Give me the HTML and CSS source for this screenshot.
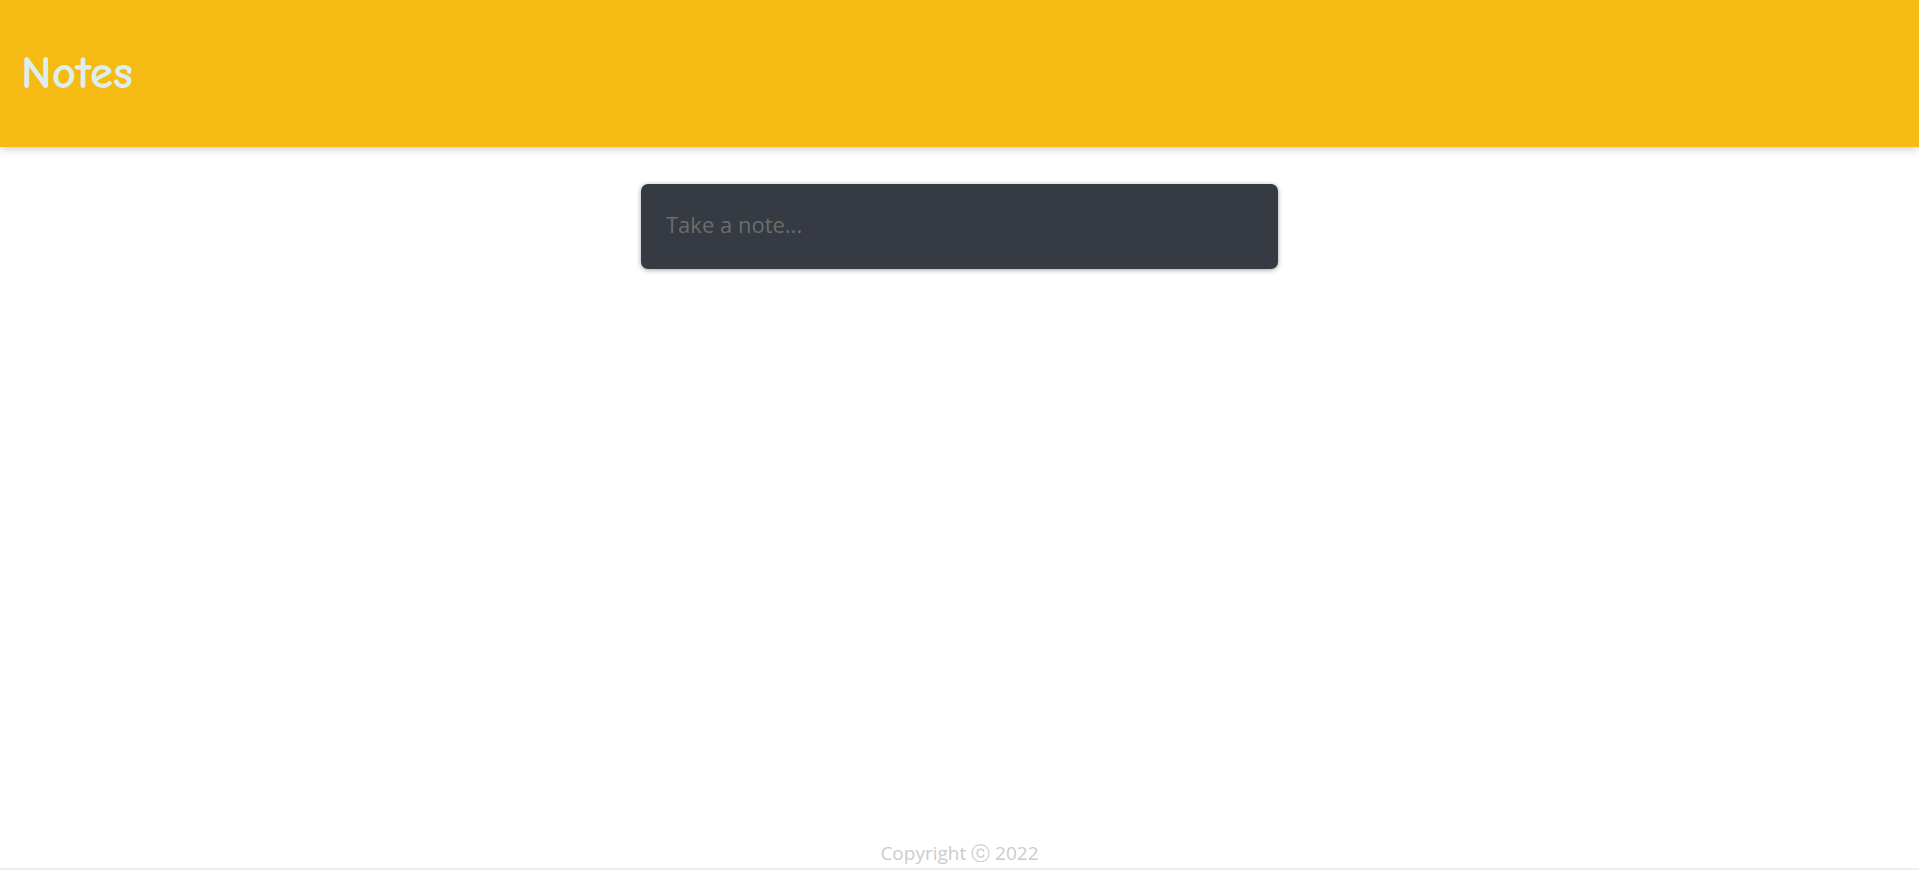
FILE: index.html
```html
<!DOCTYPE html>
<html lang="en">
<head>
<meta charset="utf-8">
<title>Keeper</title>
<link rel="stylesheet" href="styles.css">
</head>
<body>
<div class="page">
  <header class="header">
    <h1 class="brand">Notes</h1>
  </header>
  <main class="main">
    <form class="note-form">
      <textarea class="note-input" rows="1" placeholder="Take a note..."></textarea>
    </form>
  </main>
  <footer class="footer">
    <p class="copy">Copyright ⓒ 2022</p>
  </footer>
</div>
</body>
</html>
```

FILE: styles.css
```css
html, body {
  margin: 0;
  padding: 0;
  background: #ffffff;
}

.page {
  height: 870px;
  display: flex;
  flex-direction: column;
  box-sizing: border-box;
  border-bottom: 2px solid #eeeeee;
  overflow: hidden;
}

.header {
  flex: 0 0 147px;
  background: #f5ba13;
  box-shadow: 0 0 10px 0 rgba(0, 0, 0, 0.3);
  display: flex;
  align-items: center;
  padding: 0 21px;
  box-sizing: border-box;
  position: relative;
  z-index: 1;
}

.brand {
  margin: 0;
  font-family: "Comic Sans MS", "Comic Neue", cursive;
  font-size: 47px;
  font-weight: 700;
  color: #dcefed;
  line-height: 1;
}

.main {
  flex: 1;
  display: flex;
  justify-content: center;
  align-items: flex-start;
  padding-top: 37px;
}

.note-form {
  width: 637px;
  height: 85px;
  box-sizing: border-box;
  background: #363a42;
  border-radius: 7px;
  box-shadow: 0 1px 5px rgba(100, 100, 100, 0.6);
  padding: 0 25px 5px;
  display: flex;
  align-items: center;
  margin: 0;
}

.note-input {
  width: 100%;
  border: none;
  outline: none;
  resize: none;
  background: transparent;
  font-family: "Open Sans", sans-serif;
  font-size: 22px;
  line-height: 30px;
  height: 30px;
  padding: 0;
  color: #e0e0e0;
  overflow: hidden;
}

.note-input::placeholder {
  color: #6c6e6c;
}

.footer {
  display: flex;
  justify-content: center;
  align-items: flex-end;
  height: 30px;
  padding-bottom: 3px;
}

.copy {
  margin: 0;
  font-family: "Open Sans", sans-serif;
  font-size: 19px;
  line-height: 24px;
  color: #cccccc;
}
```
